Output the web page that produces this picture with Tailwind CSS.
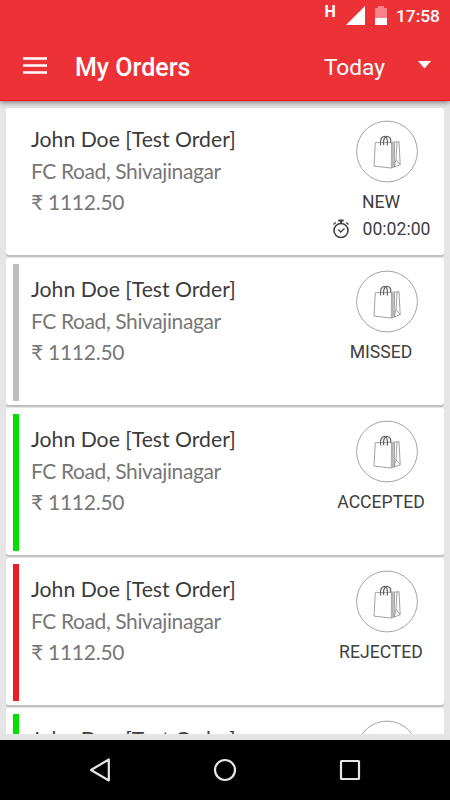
<!DOCTYPE html>
<html lang="en">
<head>
<meta charset="utf-8">
<title>My Orders</title>
<script src="https://cdn.jsdelivr.net/npm/@tailwindcss/browser@4"></script>
</head>
<body class="bg-[#e5e5e5]">
<svg class="hidden">
  <symbol id="bag" viewBox="0 0 62 62">
    <circle cx="31" cy="31" r="30.4" fill="#fff" stroke="#999" stroke-width=".9"/>
    <g fill="none" stroke="#8a8a8a" stroke-width=".8" stroke-linejoin="round">
      <path d="M19.3 22.2 35.5 21.8 35.3 47.5 18 45.6Z"/>
      <path d="M35.8 21.8 43 21.2 44.2 44.2 35.5 47.5M38.6 22 38.2 46.5M41 21.5 40 39 38.2 46.5M40 39 44.2 44.2"/>
      <path d="M36.8 22V47" stroke-width="2" stroke="#b5b5b5"/>
    </g>
    <path d="M24.7 25C23.5 19 26 15.7 28.7 15.8 31.3 16 31.7 20 31.3 25M27.7 24.5C26.6 17.5 30 15 32.5 16.3 35 17.5 35 20 34.5 22" fill="none" stroke="#606060" stroke-width="1.2"/>
  </symbol>
</svg>
<div class="flex h-[800px] w-[450px] flex-col overflow-hidden font-['Roboto',sans-serif]">
  <header class="relative z-10 h-[101px] shrink-0 border-b border-[#f90d18] bg-[#ec3237] text-white shadow-[0_1px_6px_rgba(0,0,0,0.55)]">
    <div class="flex h-8 items-start justify-end pr-[10px]">
      <span class="mr-[10px] mt-[3px] text-[16px] leading-[18px] font-bold">H</span>
      <svg class="mt-[6px] mr-[10px]" width="19" height="19"><path d="M19 0V19H0Z" fill="#fff"/></svg>
      <svg class="mt-[6px] mr-[9px]" width="12" height="19"><path d="M3 0H9V2H12V12H0V2H3Z" fill="#f58488"/><path d="M0 12H12V19H0Z" fill="#fff"/></svg>
      <span class="mt-[6px] text-[17.4px] leading-[21px] font-medium">17:58</span>
    </div>
    <div class="flex h-[68px] items-center pl-[23px] pr-[19px]">
      <svg class="-mt-px" width="24" height="17"><path d="M0 1.5H24M0 8.5H24M0 15.5H24" stroke="#fff" stroke-width="2.4"/></svg>
      <h1 class="ml-[28px] mt-[4px] text-[25px] leading-[30px] font-medium">My Orders</h1>
      <span class="ml-auto mt-[3px] text-[22.7px] leading-[30px]">Today</span>
      <svg class="ml-[33px] -mt-[2px]" width="13" height="8"><path d="M0 0H13L6.5 7.5Z" fill="#fff"/></svg>
    </div>
  </header>
  <main class="flex h-[633px] shrink-0 flex-col gap-[3px] overflow-hidden px-[6px] pt-[7px] font-['Lato',sans-serif]">
    <article class="flex h-[147px] shrink-0 rounded-[3px] bg-white pl-[7px] pt-[6px] shadow-[0_2px_0_#c1c1c1]">
      <div class="h-[137px] w-[6px]"></div>
      <div class="ml-[12px] flex-1 whitespace-nowrap pt-[9px] text-[21px] text-[#777]"><h2 class="text-[21.2px] leading-[32px] text-[#3c3c3c]">John Doe [Test Order]</h2><p class="leading-[32px] tracking-[-0.4px]">FC Road, Shivajinagar</p><p class="leading-[30px] tracking-[-0.25px]">₹ 1112.50</p></div>
      <div class="flex w-[126px] flex-col items-center pt-[6px] font-['Roboto',sans-serif] text-[17.6px] text-[#404040]"><svg class="ml-[12px] h-[63px] w-[62px] shrink-0"><use href="#bag"/></svg><span class="mt-[7px] leading-[24px]">NEW</span>
        <div class="mt-[3px] flex items-center gap-[13px] leading-[24px]">
          <svg width="18" height="20" viewBox="0 0 18 20" fill="none" stroke="#404040"><circle cx="9" cy="11.5" r="7" stroke-width="1.6"/><path d="M6.3 1.5H11.7M9 1V4.5" stroke-width="2"/><path d="M1.5 5.5 3.8 3.5M16.5 5.5 14.2 3.5M6.3 10.5 8.7 13 12.5 9.5" stroke-width="1.3"/></svg>
          <span>00:02:00</span>
        </div>
      </div>
    </article>
    <article class="flex h-[147px] shrink-0 rounded-[3px] bg-white pl-[7px] pt-[6px] shadow-[0_2px_0_#c1c1c1]">
      <div class="h-[137px] w-[6px] bg-[#bdbdbd]"></div>
      <div class="ml-[12px] flex-1 whitespace-nowrap pt-[9px] text-[21px] text-[#777]"><h2 class="text-[21.2px] leading-[32px] text-[#3c3c3c]">John Doe [Test Order]</h2><p class="leading-[32px] tracking-[-0.4px]">FC Road, Shivajinagar</p><p class="leading-[30px] tracking-[-0.25px]">₹ 1112.50</p></div>
      <div class="flex w-[126px] flex-col items-center pt-[6px] font-['Roboto',sans-serif] text-[17.6px] text-[#404040]"><svg class="ml-[12px] h-[63px] w-[62px] shrink-0"><use href="#bag"/></svg><span class="mt-[7px] leading-[24px]">MISSED</span></div>
    </article>
    <article class="flex h-[147px] shrink-0 rounded-[3px] bg-white pl-[7px] pt-[6px] shadow-[0_2px_0_#c1c1c1]">
      <div class="h-[137px] w-[6px] bg-[#00e100]"></div>
      <div class="ml-[12px] flex-1 whitespace-nowrap pt-[9px] text-[21px] text-[#777]"><h2 class="text-[21.2px] leading-[32px] text-[#3c3c3c]">John Doe [Test Order]</h2><p class="leading-[32px] tracking-[-0.4px]">FC Road, Shivajinagar</p><p class="leading-[30px] tracking-[-0.25px]">₹ 1112.50</p></div>
      <div class="flex w-[126px] flex-col items-center pt-[6px] font-['Roboto',sans-serif] text-[17.6px] text-[#404040]"><svg class="ml-[12px] h-[63px] w-[62px] shrink-0"><use href="#bag"/></svg><span class="mt-[7px] leading-[24px]">ACCEPTED</span></div>
    </article>
    <article class="flex h-[147px] shrink-0 rounded-[3px] bg-white pl-[7px] pt-[6px] shadow-[0_2px_0_#c1c1c1]">
      <div class="h-[137px] w-[6px] bg-[#ef1c24]"></div>
      <div class="ml-[12px] flex-1 whitespace-nowrap pt-[9px] text-[21px] text-[#777]"><h2 class="text-[21.2px] leading-[32px] text-[#3c3c3c]">John Doe [Test Order]</h2><p class="leading-[32px] tracking-[-0.4px]">FC Road, Shivajinagar</p><p class="leading-[30px] tracking-[-0.25px]">₹ 1112.50</p></div>
      <div class="flex w-[126px] flex-col items-center pt-[6px] font-['Roboto',sans-serif] text-[17.6px] text-[#404040]"><svg class="ml-[12px] h-[63px] w-[62px] shrink-0"><use href="#bag"/></svg><span class="mt-[7px] leading-[24px]">REJECTED</span></div>
    </article>
    <article class="flex h-[147px] shrink-0 rounded-[3px] bg-white pl-[7px] pt-[6px]">
      <div class="h-[137px] w-[6px] bg-[#00e100]"></div>
      <div class="ml-[12px] flex-1 whitespace-nowrap pt-[9px] text-[#777]"><h2 class="text-[21.2px] leading-[32px] text-[#3c3c3c]">John Doe [Test Order]</h2></div>
      <div class="flex w-[126px] flex-col items-center pt-[6px]"><svg class="ml-[12px] h-[63px] w-[62px] shrink-0"><use href="#bag"/></svg></div>
    </article>
  </main>
  <nav class="mt-[6px] flex h-[60px] shrink-0 items-center justify-between bg-black px-[88px]">
    <svg width="24" height="24" fill="none" stroke="#e6e6e6" stroke-width="2.2"><path d="M20.8 1.5V22.5L3 12Z" stroke-linejoin="round"/></svg>
    <svg width="24" height="24" fill="none" stroke="#e6e6e6" stroke-width="2.2"><circle cx="12" cy="12" r="10"/></svg>
    <svg width="24" height="24" fill="none" stroke="#e6e6e6" stroke-width="2.2"><rect x="3" y="3" width="18" height="18" rx=".5"/></svg>
  </nav>
</div>
</body>
</html>
